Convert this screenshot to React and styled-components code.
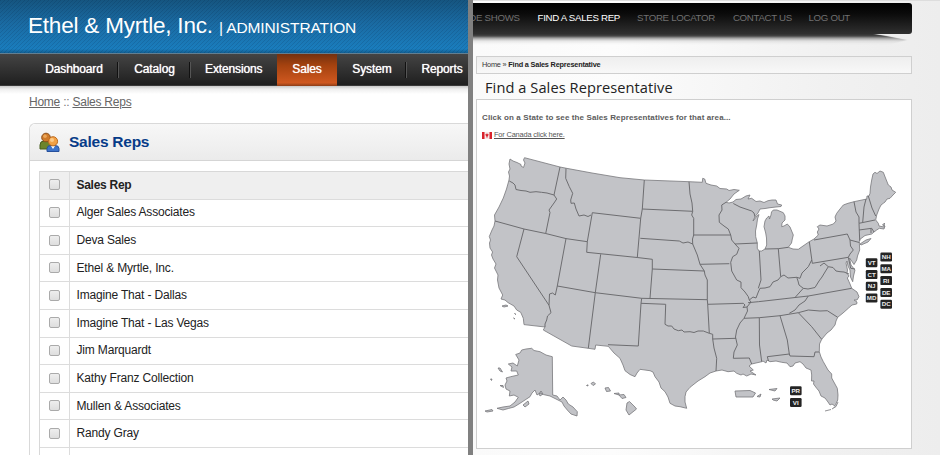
import React from "react";
import styled, { createGlobalStyle } from "styled-components";

const Global = createGlobalStyle`
  *, *::before, *::after { box-sizing: border-box; }
  body { margin: 0; overflow: hidden; font-family: "Liberation Sans", Arial, sans-serif; background: #fff; }
`;

const Page = styled.div`
  display: grid;
  grid-template-columns: 468px 5px 467px;
  height: 455px;
  overflow: hidden;
`;

const Divider = styled.div`
  background: #808080;
`;

/* ---------- Admin side ---------- */

const Admin = styled.section`
  display: flex;
  flex-direction: column;
  overflow: hidden;
  background: #fff;
`;

const Banner = styled.header`
  flex: none;
  height: 53px;
  padding: 13px 0 0 28px;
  color: #fff;
  white-space: nowrap;
  font-size: 22.5px;
  letter-spacing: -0.2px;
  line-height: 26px;
  background:
    repeating-linear-gradient(135deg, rgba(0, 20, 50, 0.13) 0 1.2px, transparent 1.2px 2.83px),
    linear-gradient(#155580 0, #1a6ba3 45%, #1a7dbd 92%, #125f92 100%);
`;

const BannerSuffix = styled.span`
  font-size: 15.5px;
  letter-spacing: -0.1px;
`;

const MenuBar = styled.nav`
  flex: none;
  display: flex;
  height: 33px;
  padding-left: 29.5px;
  background: linear-gradient(#444 0, #353535 40%, #1f1f1f 97%, #555 100%);
  border-top: 1px solid #627f92;
`;

const MenuItem = styled.a`
  display: flex;
  align-items: center;
  justify-content: center;
  width: ${(p) => p.$width}px;
  flex: none;
  position: relative;
  padding-bottom: 1.500px;
  color: #fff;
  font-size: 12px;
  letter-spacing: -0.12px;
  text-shadow: 0 0 0.8px #fff;
  background: ${(p) => (p.$active ? "linear-gradient(#74310f 0, #a4420f 35%, #cf5820 90%, #8c3d18 100%)" : "none")};

  &::after {
    content: "";
    display: ${(p) => (p.$plain ? "none" : "block")};
    position: absolute;
    right: 0;
    top: 8px;
    width: 2px;
    height: 16px;
    background: linear-gradient(90deg, #111 50%, #555 50%);
  }
`;

const AdminBody = styled.div`
  flex: 1;
  padding: 9px 0 0 29px;
  background: linear-gradient(#c8c8c8 0, #eee 3px, #fff 8px);
`;

const Crumbs = styled.div`
  height: 14px;
  line-height: 14px;
  font-size: 12px;
  letter-spacing: -0.24px;
  color: #777;
  a { color: #666; text-decoration: underline; }
`;

const Panel = styled.div`
  margin-top: 14px;
  height: 340px;
  border: 1px solid #d9d9d9;
  border-right: 0;
  border-left-width: 1.5px;
  border-radius: 6px 0 0 0;
`;

const PanelHead = styled.div`
  display: flex;
  align-items: center;
  gap: 9px;
  height: 37px;
  padding-left: 9px;
  border-bottom: 1px solid #d5d5d5;
  border-radius: 6px 0 0 0;
  background: linear-gradient(#f7f7f7, #ebebeb);
`;

const PanelTitle = styled.h1`
  margin: 0;
  font-size: 15.5px;
  letter-spacing: -0.25px;
  line-height: 20px;
  color: #063b88;
`;

const Table = styled.div`
  margin: 10px 0 0 9px;
  border-top: 1px solid #d8d8d8;
  border-left: 1px solid #d8d8d8;
`;

const Row = styled.div`
  display: grid;
  grid-template-columns: 30px 1fr;
  height: 27.62px;
  border-bottom: 1px solid #dcdcdc;
  background: ${(p) => (p.$head ? "#efefef" : "#fff")};
  color: #222;
  font-size: 12px;
  letter-spacing: ${(p) => (p.$head ? -0.28 : -0.17)}px;
  font-weight: ${(p) => (p.$head ? 700 : 400)};
`;

const CheckCell = styled.div`
  display: flex;
  align-items: center;
  justify-content: center;
  border-right: 1px solid #dcdcdc;
`;

const NameCell = styled.div`
  display: flex;
  align-items: center;
  padding: 0 0 1px 6.5px;
`;

const Check = styled.input`
  appearance: none;
  width: 11px;
  height: 11px;
  margin: 0 0 1px;
  border: 1px solid #aaa;
  border-radius: 2px;
  background: linear-gradient(#eee, #dedede);
`;

/* ---------- Store side ---------- */

const Store = styled.section`
  position: relative;
  overflow: hidden;
  display: flex;
  flex-direction: column;
  padding: 3px 28px 0 0;
  background: linear-gradient(90deg, #fafafa 0, #fcfcfc 30%, #f1f1f1 75%, #ededed 100%);
  box-shadow: inset 0 1px #ddd;
`;

const StoreNav = styled.nav`
  position: relative;
  z-index: 1;
  flex: none;
  display: flex;
  gap: 17.5px;
  height: 30.5px;
  padding-top: 9px;
  margin-left: -1px;
  border-radius: 0 3px 3px 0;
  background: linear-gradient(#000, #0b0b0b 35%, #303030);
  font-size: 9.7px;
  line-height: 12px;
  white-space: nowrap;
`;

const NavShadow = styled.svg`
  flex: none;
  display: block;
  width: 439px;
  height: 12px;
  margin-top: -1px;
`;

const StoreLink = styled.a`
  flex: none;
  width: ${(p) => p.$width}px;
  display: flex;
  justify-content: flex-end;
  letter-spacing: -0.3px;
  color: ${(p) => (p.$active ? "#fff" : "#707070")};
`;

const Path = styled.div`
  flex: none;
  height: 18px;
  margin: 11.5px 0 0 3px;
  padding-left: 5px;
  border: 1px solid #cfcfcf;
  background: linear-gradient(#eee, #f8f8f8);
  color: #333;
  font-size: 7.3px;
  letter-spacing: -0.18px;
  line-height: 16px;
  b { color: #222; }
`;

const Heading = styled.h2`
  flex: none;
  height: 25px;
  margin: 0 0 0 12px;
  font: 500 14.6px/26px "Open Sans", sans-serif;
  letter-spacing: 0.08px;
  color: #222;
  white-space: nowrap;
`;

const MapPanel = styled.div`
  flex: none;
  position: relative;
  height: 350px;
  margin-left: 3px;
  padding: 12px 0 0 5px;
  background: #fff;
  border: 1px solid #cfcfcf;
`;

const Hint = styled.p`
  margin: 0;
  font-size: 8px;
  line-height: 12px;
  font-weight: 700;
  letter-spacing: 0.11px;
  color: #5c5c5c;
`;

const Canada = styled.div`
  display: flex;
  align-items: center;
  gap: 2px;
  margin-top: 5px;
  font-size: 7.4px;
  letter-spacing: -0.17px;
  line-height: 12px;
  a { color: #555; text-decoration: underline; }
`;

const UsMap = styled.svg`
  position: absolute;
  left: 0;
  top: 45px;
  width: 434px;
  height: 302px;
`;

const menu = [
  ["Dashboard", 89],
  ["Catalog", 72],
  ["Extensions", 86.500, false, true],
  ["Sales", 60, true, true],
  ["System", 70],
  ["Reports", 70],
];

const reps = [
  "Alger Sales Associates",
  "Deva Sales",
  "Ethel & Myrtle, Inc.",
  "Imagine That - Dallas",
  "Imagine That - Las Vegas",
  "Jim Marquardt",
  "Kathy Franz Collection",
  "Mullen & Associates",
  "Randy Gray",
  "",
];

const storeLinks = [
  ["DE SHOWS", 47.7],
  ["FIND A SALES REP", 82.8, true],
  ["STORE LOCATOR", 77.5],
  ["CONTACT US", 59.500],
  ["LOG OUT", 40.5],
];

const mainland = `M510 159 L513 161 517 162.5 521 164.5 521 166 523.5 167.5 525 163 523.5 160 524.5 157.7
  L560 167 566.5 168.3 592 173 620 177.7 644.3 180 689 181.7 702.3 182.3 702.7 178.3 704.7 179 706 183.3 711 185
  716.7 186 720 188.5 726.7 189 729 190.5 734 189.5 739.3 190.3 734 194 730 199 726 202.3 729 203 733 202
  L736 199.5 741 199 746 196 750 195 748 199 751.7 198.3 756 201.5 760 201 764 202.5 768 200.7 772 200 776 200 777.5 204 781.7 205
  781 206.5 776 207 770 207.7 765 208.5 760 209 758 213 755 216.7 753 221 757 216 759 214.5
  757.5 219 756.7 225 755.5 231 755.7 236.7 757.3 243 757.3 248.3 759 251 761.7 251 765 249 766.7 245 766.5 238 765.7 233 764 226.7
  765 221 766.7 218 769 216 769.5 219 771 215 771.5 212 773.3 210 777 210 783.3 212.7 785 216 785 220 782 223 781.7 226.7
  784 226 787.3 224 790 227 793.3 235 792.3 239 791.5 243 788.3 247.3 793 249 798.3 249.3 803 246 809.3 241.7 814 239 818.3 235
  817.3 232 819 229 817.3 226.7 820 225 827 226 833.3 224 836 221 835 217 836.7 213.3 840 209 843.3 205 848 203.3 854 201.7
  L866.7 199 867 196 869 196 870 193.3 870.5 187 871.7 180 873 174 875 172.3 877 173.5 880 171 883.3 172.3 885.5 178 888.3 185
  891 187 892 190 895.7 192.3 893 195 890 198.3 887 199 885 202 883.3 203.3 881 205 879 209 876.7 215 875.7 220 878.3 223.3
  879 226 884 227 884.5 223 882.5 225 885 226 884 229 879.3 228.3 876.7 230 874 232 871.7 234 865 235.5 860 239.3 859.3 241.7 859.7 250 857.5 256
  856.7 260 854 264.5 851.7 261 849.5 258 851 265 855 270 853.5 276 852.7 281.7 850.5 277 850 270 848 266 847 261 846 263 847.5 270
  847 273.3 849 276 847.3 278 849 281.7 850 284 851.7 288.3 857 292 859 296.7 857 300 854 300 857 302 856.7 304 852 305
  848.3 308.3 843 313 837.7 317.3 836 321 835 325 831 330 827 333 821.7 339.3 819.5 344 819.3 351.7 821 357 823.3 361.7 828 370 831.7 374 831.7 378
  837.3 388.3 838 395 837.7 400 835 406 832 404 830 405 828 402 825 398 821 396 819 391 816.7 388.3 813.5 384 814 381 811.5 381 811.7 375
  811 370 806 368 803 364 800 361.7 795 363 793 366 790 366.7 787 363 781.7 362.3 776 361 770 361.7 767 360 766 363 763 361
  761.7 361.7 756 363 751.7 364 749 366 753.3 370 750 371 756 375 751 374 746.7 376 743 374 741 375 736.7 373.3 734 371 728 371.7
  722 370 716 371 710 373 705 376.7 698 381 690 387.3 686 392 685 396.7 685 402 686.7 408.3 680 406.7 675 406 670 403.3 668 397 665 391.7
  661 388 659 382 655 376.7 653 372 650 370.7 645 370 640 369.3 637 373 635 376.7 630 374.5 625 370.7 623 365 620 358.3 614 353
  608.3 346.3 595.7 345 595 349.3 588.3 348.3 571.7 346 543.3 330 545 327 524 324.6 523.3 318.3 520.7 312.3 516.7 310 514 306
  508 302.6 505 300 501 299 502.7 295 499 288 497.5 280 498 275 496 271 494.5 268 496 264 493 259 491.5 255 492.6 252
  490 248 489.5 243 490.5 240 489.3 236.5 492 230 494 226 495 221 494.5 215 499 207 503.3 198 506.5 189 509 180 509.5 176 508.5 172 510 169 509 164 Z`;

const borders = `M509.3 181 L513 183 515 185 516 189.5 521 190.5 526 191 530 192.3 536 191.7 541.5 192.3 547 193 554 195 560 167
  M554 195 L556.7 199 554 203 549 210 550 212.5 545.7 233.5
  M495 221 L524 229 545.7 233.5 566 238.6 587.3 241.7
  M524 229 L516.7 256.7 549 305.3 551 312.7 547.5 316 546.7 320 545 324 545 327
  M549 305.3 L549.5 294 552.5 293 555.3 295 557.3 286 566 238.6
  M557.3 286 L595.3 292.7 641.7 298.3 707.3 299.7
  M566 168.3 L565.7 178.3 569.3 186.7 572.7 193.3 570.7 200 571 203.3 574.3 203 576 209 579 216 584 215 588 216.5 591 215
  M587.3 241.7 L592.3 212.7 640.7 218.3
  M587.3 241.7 L586.7 252.3 637.3 257.5 652.3 259.3 652.3 269 704.3 271
  M600.7 254.3 L595.3 292.7 588.3 348.3
  M644.3 180 L642.3 209 640.7 218.3 637.3 257.5
  M642.3 209 L692.7 211.3
  M640.3 238.3 L679.3 241 683 243 688 242 692.7 244
  M689 181.7 L690 194 692 203 692.7 211.3 691.7 215 693.7 218.3 693.7 235 692.5 239 692.7 244 697.3 255 700 264.3 704.3 271 705 275 707.3 280 707.3 299.7 707.7 304.3 709.3 333.3
  M693.7 235 L730.7 235
  M700 264.3 L729.3 263.7
  M726 202.3 L721.7 205 722 210 719 215 719.3 222.3 724 226 728.3 229 730.7 235 731.7 240 735 244 739 248.3 736.7 254.3 732.7 256.7 730.7 262.3 731.7 271 736.7 280 741 282 741 287.7 745 292 748.3 296.7 749.3 300
  M735 244 L757.3 243
  M733.3 203.5 L740 207 751.7 211 754 213 755 216.7
  M652.3 269 L650 298.3
  M641.7 298.3 L641 303.3 665.7 304.3 665 324.3 668 326 671.7 326 674 329 678.3 330.7 682 330 684 332 690 331.7 694 332.5 698 331 703.3 331 709.3 333.3 712.7 334.3 712.7 339 714 348 716.7 358.3 716 371
  M641 303.3 L638.3 346 608 344.7
  M707.7 304.3 L743.3 303.3 745 305 743 307.5 747 307
  M712.7 339 L736 338.3
  M749.3 300 L751 302 747 307 747.5 311 744 318.3 740 323 736.7 330 735.5 337 737.3 345 734 352 733.3 358.3 749.3 358 751.7 364
  M744 318.3 L759.3 317.7 780 315.7 798.3 312.7 811.7 326.7 821.7 339.3
  M759.3 317.7 L759.5 345 761.7 361.7
  M780 315.7 L787.3 340 789.3 354 790 356 814 356.7 815 352 819.3 352
  M789.3 354 L767.3 356.7 768.5 361
  M798.3 312.7 L808.3 310 820 311 827.3 310.7 837.7 317.3
  M748 302.7 L758.3 301.7 808.3 296 851.7 288.3
  M808.3 296 L805 301 799 305 795 310 789.3 313.3
  M749.3 300 L753 297 756 298 758.3 292 760 288.3 765 288 770 286.7 773 282 778 280 780.7 276.7 784 275 788 278 796.7 277.3 798 281 799 285 803.3 288.3 795 297.5
  M759.3 251 L761 280 758.3 288.3
  M765 249 L778.3 248.7 788.3 247.3
  M778.3 248.7 L780.7 276.7
  M796.7 277.3 L800 278.3 802 273 808.3 266.7 811.7 260
  M809.3 241.7 L812.3 263.3 848.3 257.3 850 254 853.3 250 850.5 246 850 240 847.3 234 814 240
  M850 240 L859.3 242.5
  M803.3 288.3 L808 289 815 287.5 819 281 822 277 825 272 828.3 266.7 824 263 820 266
  M828.3 266.7 L833 267.5 836 271 840 271.7 844 272 849 274
  M848.3 257.3 L850.7 268.3 855 269
  M854 201.7 L856 212 859 217 859 223.3 859.7 240.7
  M866 199 L864 207 862.7 222.3
  M868.3 196 L872 208 875.7 216
  M859 223.3 L875 220
  M859 230 L871.7 228.3 874 232 M871 228.3 L871 233`;

const islands = `M521.7 350 L526 349 531.7 348.3 534 350.5 540 351.7 546 355 552.3 356.7 552.7 395 557 396 560 400 563 397 566 400 568.3 404 573 407
  577.3 411.7 577 416 574 415 571 414 567.3 410 564 406 562 402 558 400 554 398 550 396 543.3 394.5 540 393 537 395 535 390 532 393
  530 396.7 525 400 520 403.3 514 407 508.3 408.5 503 410 497 408.3 503 407 510 406 515 402 518.3 397.3 514 395 509.3 396 510 391
  506 389 505 385 507 381 506 378 510.7 376.7 518.3 375 516.7 371 511 371 512 367 508.3 364 513 363 517.3 366 519 360 515.7 354.5 520 353 Z
  M523 405 L528 401 529 404 525 407 Z M539 394 L541 391 543 394 540 396 Z M485 411 L492 409.5 493 411 487 412 Z
  M498 368 L500 368 502.5 372 500 371 Z M500 385.5 L503 385.5 503.5 387.5 Z M490.5 379 L492 379 491.5 380.5 Z
  M586.5 385.5 L588 384.8 588 386 Z M591 383.5 L593.5 382 595.5 384 593 385.5 Z M605 388 L608.5 387.5 610.5 391 606.5 391.5 Z
  M614 393.5 L619 393 619 395 Z M619 395 L624 394.5 626 397.5 622 398.5 Z M627 403 L629.5 401.5 635 407 636.5 409 629 415 626 410 Z
  M735 391 L750 390.5 755.5 393 753 397 736 397 Z M757 396.5 L761 394 760 397 Z M769 389.5 L777 388.5 775 391 Z M772 399 L780 398 777 401 773 400 Z
  M502 306 L506 305 508 306 504 307 Z M514.5 313.5 L516 314.5 Z M513.5 318 L515 319 Z
  M860 244 L866 240 871 238.5 868 242 861 245 Z M825 411 L831 409.5 M832 409 L836 406.5 838 402`;

const tags = [
  ["VT", 865.8, 258.3], ["CT", 865.8, 270.1], ["NJ", 865.8, 281.8], ["MD", 865.8, 293.5],
  ["NH", 880.4, 252.5], ["MA", 880.4, 264.3], ["RI", 880.4, 276.1], ["DE", 880.4, 288], ["DC", 880.4, 299.8],
  ["PR", 790, 386.2], ["VI", 790, 398],
];

function PeopleIcon() {
  return (
    <svg width="21" height="21" viewBox="0 0 21 21">
      <path d="M1 17v-4q0-4 4-4h4q3 1 3 4v4z" fill="#6c842b" stroke="#465c1c" />
      <circle cx="7" cy="5.5" r="4.3" fill="#cf7a2a" stroke="#8c4f1a" />
      <circle cx="6" cy="4.3" r="1.8" fill="#eba759" />
      <path d="M8 19.5v-3q0-3 4-3h4q4 0 4 3v3z" fill="#3e73c9" stroke="#27509c" />
      <path d="M12 14l2 3 2-3z" fill="#fff" />
      <circle cx="14" cy="9.3" r="4.6" fill="#f2a044" stroke="#bd6c22" />
      <circle cx="13" cy="8" r="2" fill="#fcc987" />
    </svg>
  );
}

function CanadaFlag() {
  return (
    <svg width="10" height="7" viewBox="0 0 10 7">
      <path d="M0 0h10v7H0z" fill="#f6e9e9" />
      <path d="M0 0h2.5v7H0zM7.5 0H10v7H7.5z" fill="#d8222c" />
      <path d="M5 1l.6 1.2 1-.2-.3 1.6L5.3 5v1h-.6V5l-1-1.4L3.4 2l1 .2z" fill="#d8222c" />
    </svg>
  );
}

export default function App() {
  return (
    <Page>
      <Global />
      <Admin>
        <Banner>
          Ethel &amp; Myrtle, Inc. <BannerSuffix>| ADMINISTRATION</BannerSuffix>
        </Banner>
        <MenuBar>
          {menu.map(([label, width, active, plain]) => (
            <MenuItem key={label} $width={width} $active={active} $plain={plain}>{label}</MenuItem>
          ))}
        </MenuBar>
        <AdminBody>
          <Crumbs><a>Home</a> :: <a>Sales Reps</a></Crumbs>
          <Panel>
            <PanelHead><PeopleIcon /><PanelTitle>Sales Reps</PanelTitle></PanelHead>
            <Table>
              <Row $head>
                <CheckCell><Check type="checkbox" /></CheckCell>
                <NameCell>Sales Rep</NameCell>
              </Row>
              {reps.map((name) => (
                <Row key={name}>
                  <CheckCell><Check type="checkbox" /></CheckCell>
                  <NameCell>{name}</NameCell>
                </Row>
              ))}
            </Table>
          </Panel>
        </AdminBody>
      </Admin>
      <Divider />
      <Store>
        <StoreNav>
          {storeLinks.map(([label, width, active]) => (
            <StoreLink key={label} $width={width} $active={active}>{label}</StoreLink>
          ))}
        </StoreNav>
        <NavShadow viewBox="0 0 439 12">
          <defs>
            <linearGradient id="drop" x2="0" y2="1">
              <stop offset="0" stopColor="#222" stopOpacity="1" />
              <stop offset="0.25" stopColor="#333" stopOpacity="0.9" />
              <stop offset="0.5" stopColor="#777" stopOpacity="0.5" />
              <stop offset="0.7" stopColor="#aaa" stopOpacity="0.22" />
              <stop offset="1" stopColor="#ccc" stopOpacity="0" />
            </linearGradient>
            <filter id="soften"><feGaussianBlur stdDeviation="1.2 0.5" /></filter>
          </defs>
          <path d="M-5 0H395Q415 3 434 7L415 12H-5z" fill="url(#drop)" filter="url(#soften)" />
        </NavShadow>
        <Path>Home » <b>Find a Sales Representative</b></Path>
        <Heading>Find a Sales Representative</Heading>
        <MapPanel>
          <Hint>Click on a State to see the Sales Representatives for that area...</Hint>
          <Canada><CanadaFlag /><a>For Canada click here.</a></Canada>
          <UsMap viewBox="477 145 434 302">
            <g fill="#c2c3c7" stroke="#77777b" strokeWidth="0.8" strokeLinejoin="round">
              <path d={mainland} />
              <path d={islands} />
              <path d={borders} fill="none" stroke="#68686c" strokeWidth="0.95" />
            </g>
            {tags.map(([code, x, y]) => (
              <g key={code}>
                <rect x={x} y={y} width="11.6" height="9" rx="1.2" fill="#242424" />
                <text x={x + 5.8} y={y + 6.6} textAnchor="middle" fontSize="6.2" fontWeight="700" fill="#eee">{code}</text>
              </g>
            ))}
          </UsMap>
        </MapPanel>
      </Store>
    </Page>
  );
}
